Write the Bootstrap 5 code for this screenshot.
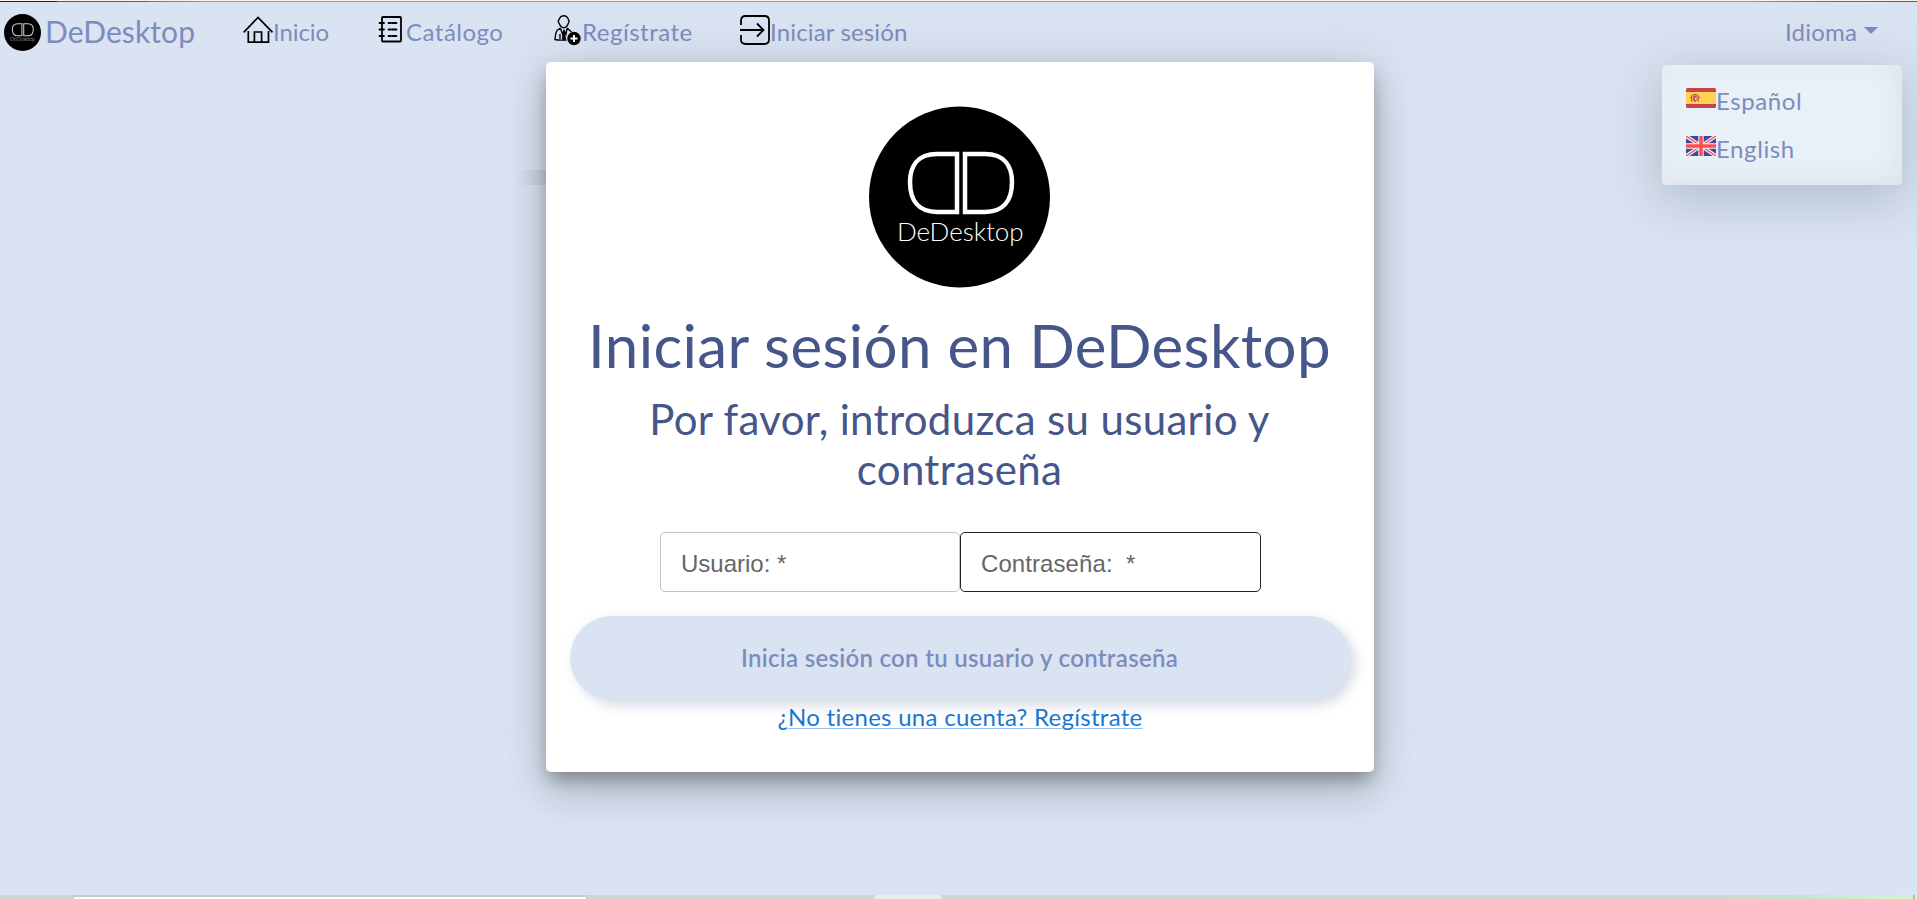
<!DOCTYPE html>
<html lang="es">
<head>
<meta charset="utf-8">
<meta name="viewport" content="width=device-width, initial-scale=1">
<title>DeDesktop</title>
<link href="https://cdn.jsdelivr.net/npm/bootstrap@5.3.0/dist/css/bootstrap.min.css" rel="stylesheet">
<style>
  :root { --ink: #7c8cbd; --sky: #dae3f2; }
  body { background: var(--sky); font-family: Lato, sans-serif; font-size: 24px; color: var(--ink); height: 899px; overflow: hidden; letter-spacing: .35px; }
  .top-strip { height: 2px; background: linear-gradient(#fbf3ea, #fbf3ea) 0 0 / 100% 1px no-repeat, linear-gradient(90deg, #232046 57px, #6b40b0 57px, #8a45a0 149px, #bd5875 150px, #c07a68 200px, #bd9070 202px, #bd9070 1750px, #bd7560 1775px, #b54378 1835px, #b03a88 1890px, #6a44b4 1892px); }
  .main-nav { height: 60px; padding: 0 21px 0 4px; line-height: 36px; }
  .main-nav .navbar-brand { font-size: 30px; color: var(--ink); letter-spacing: .1px; padding: 0; margin: 0; gap: 4px; width: 239px; line-height: 36px; }
  .navbar-brand span { margin-top: -2px; }
  .main-nav .nav-link { color: var(--ink); padding: 0; height: 35px; line-height: 33px; white-space: nowrap; }
  .main-nav svg, .lang-menu svg { flex: none; display: block; }
  .nav-list { width: 900px; }
  .item-home { width: 135px; } .item-catalog { width: 176px; } .item-register { width: 186px; }
  .item-home .nav-link { letter-spacing: -.1px; }
  .item-catalog .nav-link, .item-register .nav-link { letter-spacing: .5px; }
  .item-login .nav-link { letter-spacing: .15px; }
  .lang { width: 111px; position: relative; }
  .lang .nav-link { letter-spacing: .2px; padding-bottom: 2px; }
  .caret { width: 0; height: 0; border: 7px solid transparent; border-top-color: var(--ink); border-bottom: 0; margin-left: 7px; margin-top: -1px; }
  .lang-menu { position: absolute; top: 50px; right: -6px; width: 240px; height: 120px; border: 0; border-radius: 5px; padding: 12px 24px; background: #e8f0f8; box-shadow: 0 12px 50px 6px rgba(80,100,110,.27), inset -5px -5px 24px #dfe2e9, inset 3px 3px 5px rgba(244,247,251,.7); }
  .lang-menu a { color: var(--ink); height: 48px; text-decoration: none; letter-spacing: .6px; }
  .flag { margin-bottom: 5px; }
  .login-card { left: 1px; width: 828px; height: 710px; border: 0; border-radius: 5px; padding: 44px 24px 0; color: #46568a; box-shadow: 0 11px 15px -7px rgba(0,0,0,.2), 0 24px 38px 3px rgba(0,0,0,.12), 0 0 46px 6px rgba(60,90,90,.12), 0 9px 18px rgba(0,0,0,.16); }
  .login-card::before { content: ""; position: absolute; left: -32px; top: 108px; width: 32px; height: 15px; background: linear-gradient(90deg, transparent, rgba(60,70,80,.13)); }
  .login-card h1 { font-size: 60px; line-height: 72px; letter-spacing: .37px; margin: 21px 0 13px; font-weight: 400; white-space: nowrap; }
  .login-card h2 { font-size: 42px; line-height: 50px; letter-spacing: .33px; margin: 0; font-weight: 400; padding: 0 70px; }
  .field-row { margin: 38px 0 0 2px; font-family: "Liberation Sans", sans-serif; letter-spacing: 0; }
  .field { width: 300px; height: 60px; border: 1px solid #c4c4c4; border-radius: 5px; padding: 2px 20px 0; line-height: 58px; color: #666; text-align: left; white-space: pre; }
  .field.dark-edge { width: 301px; border-color: #212121; letter-spacing: .08px; }
  .login-btn { height: 84px; width: 780px; margin-top: 24px; border: 0; border-radius: 42px; background: var(--sky); color: var(--ink); font-size: 24px; font-weight: 600; letter-spacing: .3px; box-shadow: 6px 6px 12px rgba(170,180,205,.45), -3px -3px 12px rgba(248,252,250,.9); }
  .login-btn:hover { background: var(--sky); color: var(--ink); }
  .signup { color: #1976d2; text-decoration: underline; text-decoration-color: rgba(25,118,210,.45); text-decoration-thickness: 1px; text-underline-offset: 2px; line-height: 34px; letter-spacing: .28px; margin-left: 1px; }
  .bottom-strip { position: fixed; left: 0; right: 0; bottom: 0; height: 4px; background: linear-gradient(90deg, transparent 1715px, #c8e2c8 1790px, #d6eed2 1880px, #d8f2d4), #d4d4d4; padding-left: 73px; }
  .strip-field { width: 514px; height: 4px; border: 1px solid #c9c9c9; border-top-width: 2px; border-bottom: 0; background: #fff; }
  .strip-tab { width: 66px; height: 4px; background: #ececec; margin-left: 288px; }
  .strip-end { width: 2px; height: 4px; background: #a6bfa4; margin-left: auto; margin-right: 2px; }
</style>
<script src="https://cdn.jsdelivr.net/npm/bootstrap@5.3.0/dist/js/bootstrap.bundle.min.js"></script>
</head>
<body>
<div class="top-strip"></div>
<nav class="main-nav d-flex align-items-center">
  <a class="navbar-brand d-flex align-items-center" href="#">
    <svg width="37" height="37" viewBox="0 0 182 182"><circle cx="91" cy="91" r="91"/><g fill="none" stroke="#ccd" stroke-width="5"><path d="M88 48H68C48 48 41 60 41 76C41 96 50 107 68 107H88Z"/><path d="M97 48H117C137 48 144 60 144 76C144 96 135 107 117 107H97Z"/></g><text x="91" y="135" text-anchor="middle" textLength="124" font-size="27" font-weight="300" fill="#ccd" letter-spacing="0">DeDesktop</text></svg>
    <span>DeDesktop</span>
  </a>
  <ul class="nav-list nav flex-nowrap mb-0">
    <li class="item-home"><a class="nav-link d-flex" href="#">
      <svg width="30" height="30" viewBox="0 0 30 30" fill="none" stroke="#000" stroke-width="1.7"><path d="M.7 17.3 15 2.5 29.5 17.3M5.3 16v11.2h20.2V16M11.4 27V17h7.2v10"/></svg><span>Inicio</span></a></li>
    <li class="item-catalog"><a class="nav-link d-flex" href="#">
      <svg width="28" height="30" viewBox="0 0 28 30" fill="none" stroke="#000" stroke-width="1.8" stroke-linecap="round"><rect x="4" y="2" width="19" height="24.5" rx="1"/><path d="M1.5 8H6M1.5 14.5H6M1.5 21H6M10.500 8H12.500M14 8h4.500M10.500 14.500H12.500M14 14.500h4.500M10.500 21H12.500M14 21h4.500"/></svg><span>Catálogo</span></a></li>
    <li class="item-register"><a class="nav-link d-flex" href="#">
      <svg width="28" height="32" viewBox="0 0 28 32"><g fill="none" stroke="#000" stroke-width="1.4"><path d="M5.500 3.500Q7 .8 9.800.8T14 3.500L15.200 6.500 13 11Q9.800 14.500 6.500 11L4.200 6.500ZM6.500 13 3 15.500Q1.500 18 1 24.500Q4 25.500 12.500 25M13 13l4.500 4M6.500 13.500 8.500 19 10 15.500 12 19 13 13.500M9.800 15v10M6 19v5"/></g><path d="M8.600 17h2.600l.8 7-2 2-2-2z"/><circle cx="20" cy="23.500" r="6.700"/><path d="M20 20v7M16.500 23.500h7" stroke="#fff" stroke-width="2"/></svg><span>Regístrate</span></a></li>
    <li class="item-login"><a class="nav-link d-flex" href="#">
      <svg width="30" height="30" viewBox="0 0 30 30" fill="none" stroke="#000" stroke-width="1.8"><path d="M1 10V5.500Q1 1 5.500 1H24.500Q29 1 29 5.500V24.500Q29 29 24.500 29H5.500Q1 29 1 24.500V20M0 15H23M17 8.500 23.500 15 17 21.500"/></svg><span>Iniciar sesión</span></a></li>
  </ul>
  <div class="lang ms-auto">
    <a class="nav-link d-flex align-items-center" href="#"><span>Idioma</span><span class="caret"></span></a>
    <div class="lang-menu">
      <a class="d-flex align-items-center" href="#">
        <svg class="flag" width="30" height="20" viewBox="0 0 30 20"><rect width="30" height="20" rx="1.500" fill="#c9434e"/><path fill="#ffd250" d="M0 4h30v12H0z"/><g fill="#c84b4b"><path d="M5 7h1.300v6.500H5zM11.500 7h1.300v6.500h-1.300zM7.200 8h3.500v4.500l-1.700 1.500-1.800-1.500z"/><path d="M7 6h4v1.500H7zM4 9h2v1H4zM12 9h2v1h-2z"/></g><path fill="#e8cdd0" d="M8.800 9.500h1.500V12H8.800z"/></svg><span>Español</span></a>
      <a class="d-flex align-items-center" href="#">
        <svg class="flag" width="30" height="20" viewBox="0 0 30 20"><path fill="#41479b" d="M0 0h30v20H0z"/><path d="m0 0 30 20M30 0 0 20" stroke="#f5f5f5" stroke-width="3.600"/><path d="m0 0 30 20M30 0 0 20" stroke="#ff4b55" stroke-width="1.400"/><path d="M15 0v20M0 10h30" stroke="#f5f5f5" stroke-width="5.400"/><path d="M15 0v20M0 10h30" stroke="#ff4b55" stroke-width="3.400"/></svg><span>English</span></a>
    </div>
  </div>
</nav>
<main class="d-flex justify-content-center">
  <section class="login-card card align-items-center text-center">
    <svg width="182" height="182" viewBox="0 0 182 182"><circle cx="90.500" cy="91" r="90.500"/><g fill="none" stroke="#fff" stroke-width="4.500"><path d="M88 48H68C48 48 41 61 41 76C41 95 50 106 68 106H88Z"/><path d="M96 48H116C136 48 143 61 143 76C143 95 134 106 116 106H96Z"/></g><text x="28" y="134.500" textLength="127" font-size="26" font-weight="300" fill="#fff">DeDesktop</text></svg>
    <h1>Iniciar sesión en DeDesktop</h1>
    <h2>Por favor, introduzca su usuario y contraseña</h2>
    <div class="field-row d-flex">
      <div class="field">Usuario: *</div>
      <div class="field dark-edge">Contraseña:  *</div>
    </div>
    <button class="login-btn btn" type="button">Inicia sesión con tu usuario y contraseña</button>
    <a class="signup" href="#">¿No tienes una cuenta? Regístrate</a>
  </section>
</main>
<footer class="bottom-strip d-flex"><div class="strip-field"></div><div class="strip-tab"></div><div class="strip-end"></div></footer>
</body>
</html>
